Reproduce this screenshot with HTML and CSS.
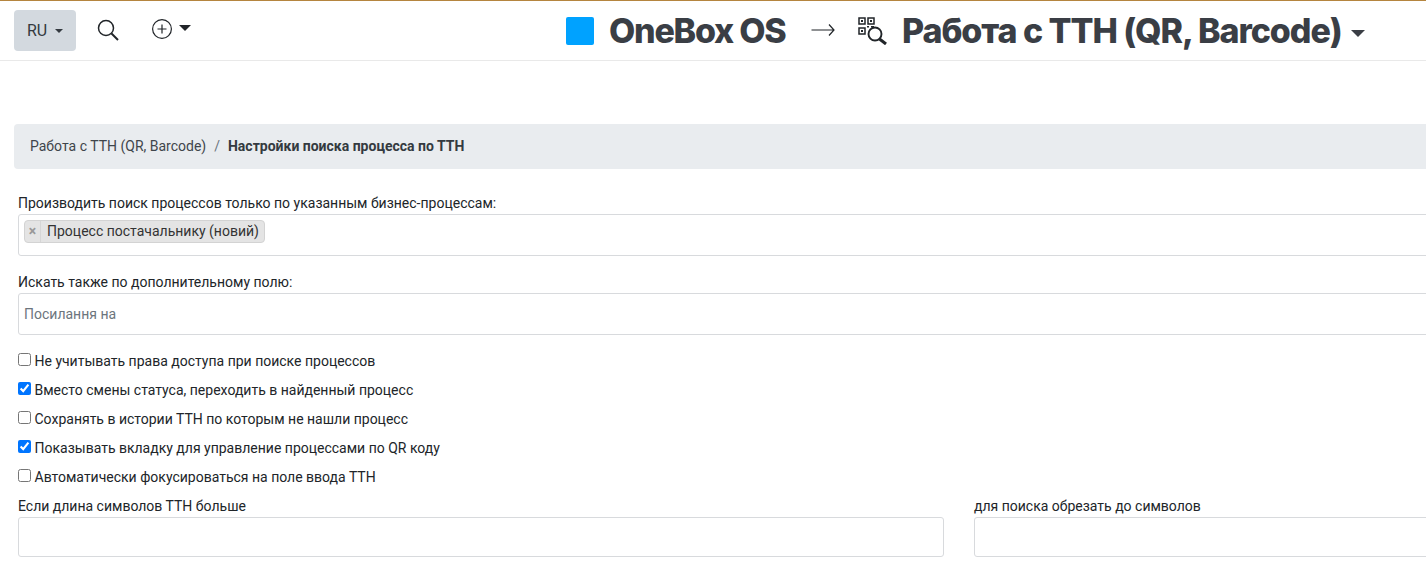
FILE: index.html
```html
<!DOCTYPE html>
<html lang="ru">
<head>
<meta charset="utf-8">
<title>Настройки поиска процесса по ТТН</title>
<link rel="stylesheet" href="styles.css">
</head>
<body>
<header class="topbar">
  <div class="lang">RU <span class="caret-small"></span></div>
  <svg class="icon-search" width="22" height="22" viewBox="0 0 22 22" fill="none" stroke="#212529"><circle cx="9" cy="9" r="7.5" stroke-width="1.5"/><path d="M14.5 14.500L21 21" stroke-width="2"/></svg>
  <svg class="icon-plus" width="22" height="22" viewBox="0 0 22 22" fill="none" stroke="#212529" stroke-width="1.2"><circle cx="11" cy="11" r="9.4"/><path d="M11 6.500v9M6.500 11h9"/></svg>
  <span class="caret-plus"></span>
  <div class="logo"></div>
  <div class="brand">OneBox OS</div>
  <svg class="arrow" width="24" height="14" viewBox="0 0 24 14" fill="none" stroke="#212529" stroke-width="1.2"><path d="M0.500 7H23M18 1.500l5 5.500-5 5.500"/></svg>
  <svg class="icon-qr" width="29" height="28" viewBox="0 0 29 28" fill="none" stroke="#212529">
    <path stroke-width="1.5" d="M1 1h6v6H1zM10 1h6v6h-6zM1 11h6v6H1z"/>
    <path fill="#212529" stroke="none" d="M3 3h2v2H3zM12 3h2v2h-2zM3 13h2v2H3zM9 9h2v1.500H9zM13 9h3v1.500h-3z"/>
    <circle cx="17" cy="17" r="6.500" stroke-width="1.900"/><path stroke-width="3" d="M21.500 22l6.500 5"/>
  </svg>
  <div class="title">Работа с ТТН (QR, Barcode)</div>
  <span class="caret-title"></span>
</header>
<main class="content">
  <nav class="crumbs"><span>Работа с ТТН (QR, Barcode)</span><span class="sep">/</span><strong>Настройки поиска процесса по ТТН</strong></nav>
  <form class="form">
    <label class="label">Производить поиск процессов только по указанным бизнес-процессам:</label>
    <div class="select multi"><span class="tag"><span class="tag-x">×</span><span class="tag-text">Процесс постачальнику (новий)</span></span></div>
    <label class="label second">Искать также по дополнительному полю:</label>
    <div class="select single">Посилання на</div>
    <div class="checks">
      <label class="check"><input type="checkbox">Не учитывать права доступа при поиске процессов</label>
      <label class="check"><input type="checkbox" checked>Вместо смены статуса, переходить в найденный процесс</label>
      <label class="check"><input type="checkbox">Сохранять в истории ТТН по которым не нашли процесс</label>
      <label class="check"><input type="checkbox" checked>Показывать вкладку для управление процессами по QR коду</label>
      <label class="check"><input type="checkbox">Автоматически фокусироваться на поле ввода ТТН</label>
    </div>
    <div class="cols">
      <div><label class="label">Если длина символов ТТН больше</label><input class="field" type="text"></div>
      <div><label class="label">для поиска обрезать до символов</label><input class="field" type="text"></div>
    </div>
  </form>
</main>
</body>
</html>
```
FILE: styles.css
```css
html, body { margin: 0; padding: 0; height: 586px; overflow: hidden; background: #fff; }
body { font: 14px/21px Roboto, "Liberation Sans", sans-serif; color: #212529; width: 1930px; }
.topbar { display: flex; align-items: center; border-top: 1px solid #b5853f; border-bottom: 1px solid #e9e9e9; height: 59px; padding-left: 14px; }
.lang { width: 62px; height: 41px; box-sizing: border-box; background: #d3d9df; border-radius: 4px; display: flex; align-items: center; justify-content: center; gap: 8px; color: #343a40; font-size: 16px; }
.caret-small { border: 4px solid transparent; border-top-color: #343a40; border-bottom: 0; }
.icon-search { margin-left: 21px; margin-top: -1px; }
.icon-plus { margin-left: 32px; margin-top: -3px; }
.caret-plus { margin-left: 6px; margin-top: -5px; border: 6px solid transparent; border-top: 6px solid #212529; border-bottom: 0; }
.logo { width: 28px; height: 28px; margin-left: 375px; background: #00a2ff; border-radius: 2px; }
.brand { margin-left: 15px; width: 177px; font: 800 34px/40px Inter, "Open Sans", sans-serif; letter-spacing: -1.25px; color: #3a3e45; white-space: nowrap; }
.arrow { margin-left: 25px; margin-top: -2px; }
.icon-qr { margin-left: 23px; margin-top: 1px; }
.title { margin-left: 15px; width: 440px; font: 800 34px/40px Inter, "Open Sans", sans-serif; letter-spacing: -1.06px; color: #3a3e45; white-space: nowrap; }
.caret-title { margin-left: 9px; margin-top: 5px; border: 7px solid transparent; border-top: 7px solid #3a3e45; border-bottom: 0; }
.content { padding: 63px 0 0 14px; }
.crumbs { height: 45px; background: #e9ecef; border-radius: 4px; display: flex; align-items: center; padding-left: 16px; color: #3f454b; }
.crumbs .sep { margin: 0 8px; color: #6c757d; }
.crumbs strong { color: #343a40; font-weight: 700; }
.form { padding: 24px 0 0 4px; }
.label { display: block; line-height: 21px; height: 21px; }
.select, .field { display: block; box-sizing: border-box; border: 1px solid #d8dadd; border-radius: 3px; background: #fff; }
.multi { height: 42px; padding: 5px; }
.second { margin-top: 16px; }
.single { height: 42px; line-height: 40px; padding-left: 5px; color: #6c757d; }
.tag { display: inline-flex; height: 23px; line-height: 20px; background: #e4e4e4; border: 1px solid #d3d3d3; border-radius: 4px; box-sizing: border-box; color: #333; }
.tag-x { width: 15px; text-align: center; color: #999; font-weight: 700; border-right: 1px solid #d6d6d6; }
.tag-text { padding: 0 5px 0 6px; }
.checks { padding-top: 12px; }
.check { display: flex; align-items: center; height: 29px; }
.check input { width: 13px; height: 13px; margin: 0 3.5px 4px 0; accent-color: #0075ff; }
.cols { display: flex; gap: 30px; margin-top: 4px; }
.cols > div { width: 926px; }
.field { width: 100%; height: 40px; }
```
